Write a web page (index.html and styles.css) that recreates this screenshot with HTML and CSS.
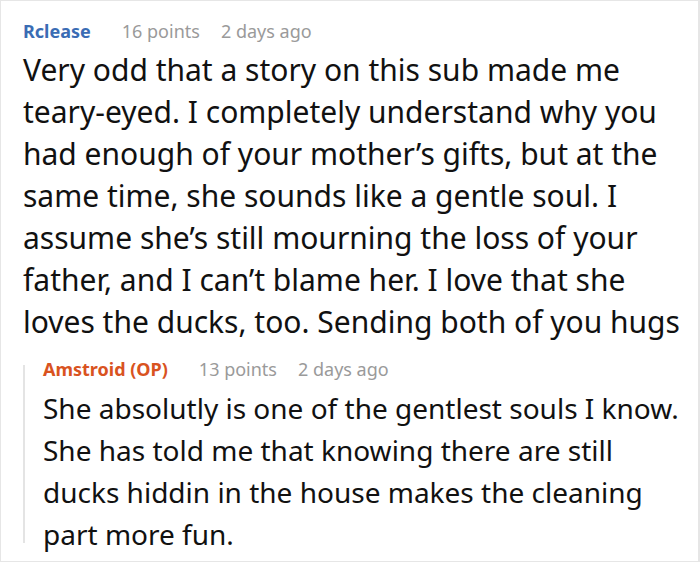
FILE: index.html
```html
<!DOCTYPE html>
<html>
<head>
<meta charset="utf-8">
<link rel="stylesheet" href="styles.css">
</head>
<body>
<div class="frame">
  <div class="comment">
    <div class="meta">
      <span class="author">Rclease</span>
      <span class="info">16 points</span>
      <span class="info">2 days ago</span>
    </div>
    <p class="text">Very odd that a story on this sub made me teary-eyed. I completely understand why you had enough of your mother’s gifts, but at the same time, she sounds like a gentle soul. I assume she’s still mourning the loss of your father, and I can’t blame her. I love that she loves the ducks, too. Sending both of you hugs</p>
    <div class="reply">
      <div class="rail"></div>
      <div class="reply-body">
        <div class="meta">
          <span class="author op">Amstroid (OP)</span>
          <span class="info">13 points</span>
          <span class="info">2 days ago</span>
        </div>
        <p class="text reply-text">She absolutly is one of the gentlest souls I know. She has told me that knowing there are still ducks hiddin in the house makes the cleaning part more fun.</p>
      </div>
    </div>
  </div>
</div>
</body>
</html>
```

FILE: styles.css
```css
html, body {
  margin: 0;
  padding: 0;
  background: #ffffff;
}
.frame {
  width: 700px;
  height: 562px;
  box-sizing: border-box;
  border: 1px solid #e6e6e6;
  border-right-width: 2px;
  overflow: hidden;
}
.comment {
  padding: 18px 8px 0 22px;
  font-family: "Noto Sans", "Open Sans", sans-serif;
  color: #111;
}
.meta {
  display: flex;
  gap: 21px;
  font-size: 18px;
  line-height: 24px;
  height: 24px;
}
.author {
  font-weight: bold;
  color: #3a6cb4;
  margin-right: 10px;
}
.author.op {
  color: #d9531f;
}
.info {
  color: #9a9a9a;
}
.text {
  margin: 6px 0 0 0;
  font-size: 30px;
  line-height: 42px;
}
.reply-text {
  font-size: 28px;
}
.reply {
  margin-top: 14px;
  display: flex;
}
.rail {
  width: 2px;
  flex: none;
  background: #e4e4e4;
  margin: 8px 0 12px 0;
}
.reply-body {
  padding-left: 18px;
  flex: 1;
}
```
